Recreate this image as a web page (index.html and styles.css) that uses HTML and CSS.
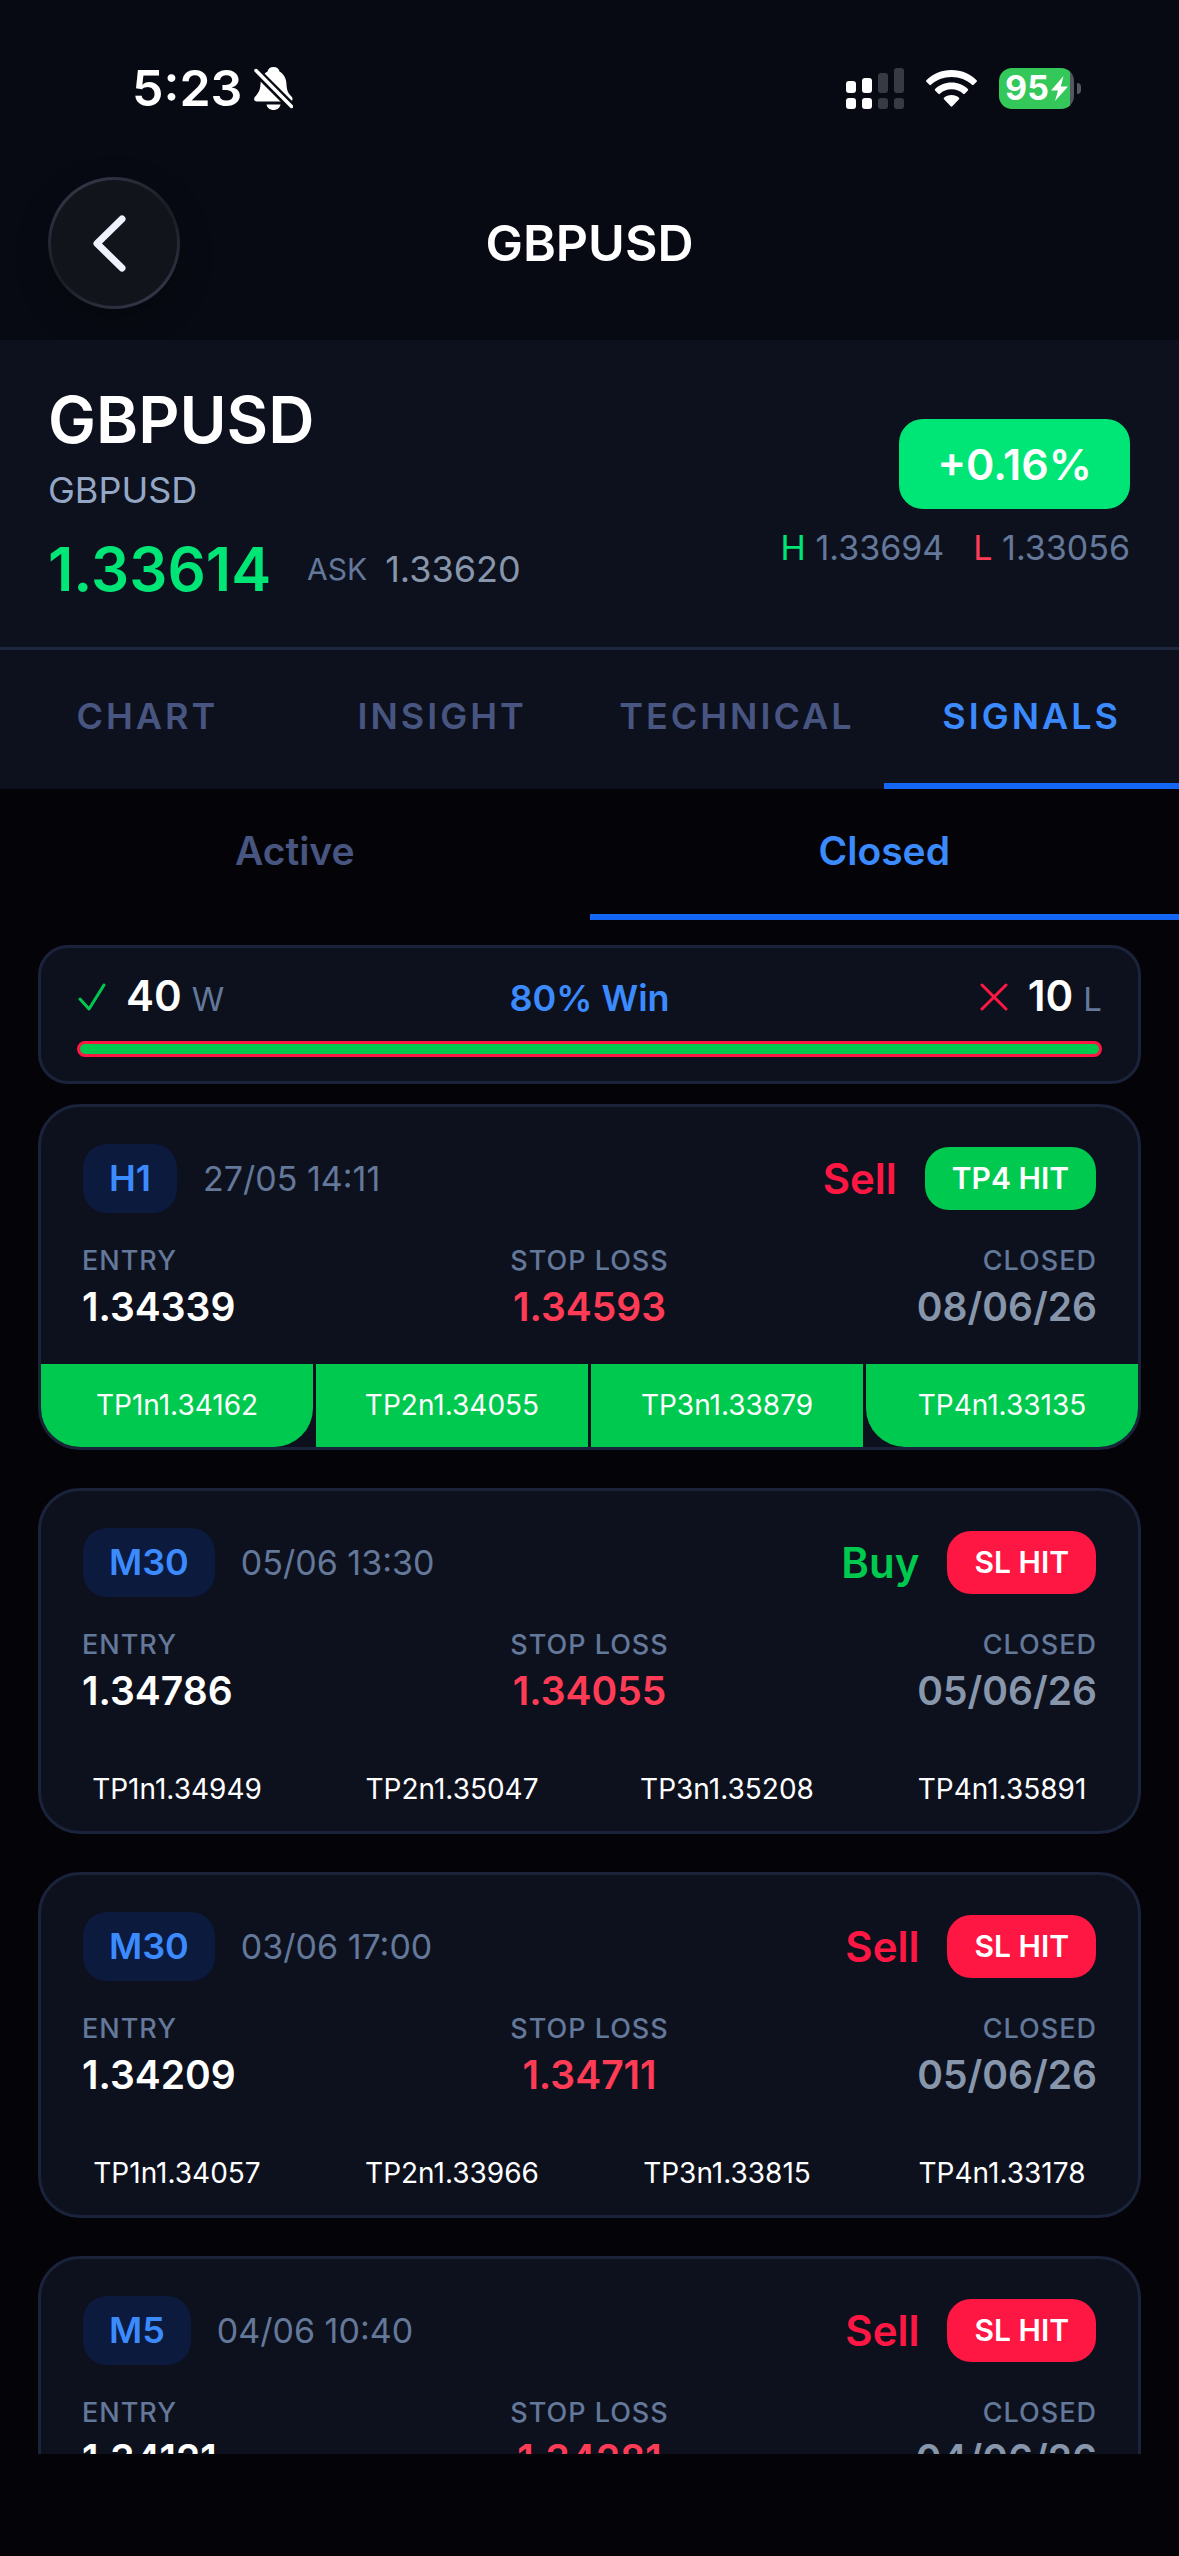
FILE: index.html
```html
<!DOCTYPE html>
<html lang="en">
<head>
    <meta charset="UTF-8">
    <meta name="viewport" content="width=device-width, initial-scale=1.0">
    <title>GBPUSD - Signals</title>
    <link rel="stylesheet" href="styles.css">
</head>
<body>
    <div class="app">
        <div class="status-bar">
            <div class="status-left">
                <span class="time">5:23</span>
                <svg class="bell" viewBox="0 0 39 43" aria-label="Silent">
                    <path fill="#fff" d="M19.500 0c3.500 0 5.500 2 6 4.500 4.500 2.500 6.800 7 7 13 .3 7 2.500 9.500 5 12 1.800 2 1.300 5-1.500 5H3c-3 0-3.800-3-1.800-5C4 26.500 6 24 6.500 17.500c.3-6 2.500-10.500 7-13C14 2 16 0 19.500 0z"/>
                    <path fill="#fff" d="M12.500 37.500h14c-.6 3.300-3.400 5.500-7 5.500s-6.400-2.200-7-5.500z"/>
                    <path stroke="#070a12" stroke-width="8.500" d="M-1 1l42 42"/>
                    <path stroke="#fff" stroke-width="3.500" stroke-linecap="round" d="M2 3.500l35.500 36"/>
                </svg>
            </div>
            <div class="status-right">
                <svg class="signal" viewBox="0 0 58 41" aria-label="Signal">
                    <g fill="#fff">
                        <rect x="0" y="13" width="10" height="12" rx="3"/>
                        <rect x="16" y="10" width="10" height="15" rx="3"/>
                        <rect x="0" y="30" width="10" height="11" rx="3"/>
                        <rect x="16" y="30" width="10" height="11" rx="3"/>
                    </g>
                    <g fill="#383a43">
                        <rect x="32" y="5" width="10" height="20" rx="3"/>
                        <rect x="48" y="0" width="10" height="25" rx="3"/>
                        <rect x="32" y="30" width="10" height="11" rx="3"/>
                        <rect x="48" y="30" width="10" height="11" rx="3"/>
                    </g>
                </svg>
                <svg class="wifi" viewBox="0 0 51 37" aria-label="Wi-Fi">
                    <path fill="#fff" d="M25.500 0C35.500 0 44.500 4 50.600 10.200c.5.500.5 1.100 0 1.600l-3 3c-.5.500-1.100.5-1.600 0C40.700 9.800 33.500 7 25.500 7S10.300 9.800 5 14.800c-.5.500-1.100.5-1.600 0l-3-3c-.5-.5-.5-1.100 0-1.600C6.500 4 15.500 0 25.500 0z"/>
                    <path fill="#fff" d="M25.500 12.500c6.500 0 12.200 2.500 16.400 6.500.5.500.5 1.100 0 1.600l-3.200 3.200c-.5.500-1.100.5-1.600 0-3-2.800-7-4.500-11.600-4.500s-8.600 1.700-11.600 4.500c-.5.500-1.100.5-1.600 0l-3.200-3.200c-.5-.5-.5-1.100 0-1.600 4.200-4 9.900-6.500 16.400-6.500z"/>
                    <path fill="#fff" d="M25.500 25c3 0 5.500 1 7.500 2.700.5.500.5 1.100 0 1.600l-6.700 7c-.5.500-1.100.5-1.600 0l-6.700-7c-.5-.5-.5-1.100 0-1.600C20 26 22.500 25 25.500 25z"/>
                </svg>
                <div class="battery">
                    <span class="battery-level">95</span>
                    <svg class="bolt" viewBox="0 0 17 25" aria-label="Charging">
                        <path fill="#fff" d="M12.500 0L0 14.500h7L4 25 17 10.500H9.800z"/>
                    </svg>
                </div>
            </div>
        </div>

        <header class="navbar">
            <button class="back" aria-label="Back">
                <svg viewBox="0 0 33 57">
                    <path fill="none" stroke="#eff2fc" stroke-width="7" stroke-linecap="round" stroke-linejoin="round" d="M29 4L4 28.500 29 53"/>
                </svg>
            </button>
            <div class="navbar-title">GBPUSD</div>
        </header>

        <section class="quote">
            <div class="quote-left">
                <h1>GBPUSD</h1>
                <div class="quote-name">GBPUSD</div>
                <div class="quote-prices">
                    <span class="bid">1.33614</span>
                    <span class="ask-label">ASK</span>
                    <span class="ask">1.33620</span>
                </div>
            </div>
            <div class="quote-right">
                <div class="change">+0.16%</div>
                <div class="range">
                    <span><b class="high">H</b> 1.33694</span>
                    <span><b class="low">L</b> 1.33056</span>
                </div>
            </div>
        </section>

        <nav class="tabs">
            <button>CHART</button>
            <button>INSIGHT</button>
            <button>TECHNICAL</button>
            <button class="active">SIGNALS</button>
        </nav>

        <nav class="subtabs">
            <button>Active</button>
            <button class="active">Closed</button>
        </nav>

        <main class="list">
            <div class="stats">
                <div class="stats-row">
                    <div class="stat">
                        <svg viewBox="0 0 28 28">
                            <path fill="none" stroke="#00c950" stroke-width="3" stroke-linecap="round" stroke-linejoin="round" d="M2 16l9 10L26 2"/>
                        </svg>
                        <strong>40</strong>
                        <span>W</span>
                    </div>
                    <div class="win-rate">80% Win</div>
                    <div class="stat stat-loss">
                        <svg viewBox="0 0 28 28">
                            <path fill="none" stroke="#ff1744" stroke-width="3" stroke-linecap="round" d="M2 2l24 24M26 2L2 26"/>
                        </svg>
                        <strong>10</strong>
                        <span>L</span>
                    </div>
                </div>
                <div class="stats-bar"></div>
            </div>

            <article class="card">
                <div class="card-head">
                    <span class="timeframe">H1</span>
                    <span class="opened">27/05 14:11</span>
                    <span class="side sell">Sell</span>
                    <span class="result hit">TP4 HIT</span>
                </div>
                <div class="levels">
                    <div class="level">
                        <span>ENTRY</span>
                        <strong>1.34339</strong>
                    </div>
                    <div class="level stop">
                        <span>STOP LOSS</span>
                        <strong>1.34593</strong>
                    </div>
                    <div class="level closed">
                        <span>CLOSED</span>
                        <strong>08/06/26</strong>
                    </div>
                </div>
                <div class="targets reached">
                    <div>TP1n1.34162</div>
                    <div>TP2n1.34055</div>
                    <div>TP3n1.33879</div>
                    <div>TP4n1.33135</div>
                </div>
            </article>

            <article class="card">
                <div class="card-head">
                    <span class="timeframe">M30</span>
                    <span class="opened">05/06 13:30</span>
                    <span class="side buy">Buy</span>
                    <span class="result">SL HIT</span>
                </div>
                <div class="levels">
                    <div class="level">
                        <span>ENTRY</span>
                        <strong>1.34786</strong>
                    </div>
                    <div class="level stop">
                        <span>STOP LOSS</span>
                        <strong>1.34055</strong>
                    </div>
                    <div class="level closed">
                        <span>CLOSED</span>
                        <strong>05/06/26</strong>
                    </div>
                </div>
                <div class="targets">
                    <div>TP1n1.34949</div>
                    <div>TP2n1.35047</div>
                    <div>TP3n1.35208</div>
                    <div>TP4n1.35891</div>
                </div>
            </article>

            <article class="card">
                <div class="card-head">
                    <span class="timeframe">M30</span>
                    <span class="opened">03/06 17:00</span>
                    <span class="side sell">Sell</span>
                    <span class="result">SL HIT</span>
                </div>
                <div class="levels">
                    <div class="level">
                        <span>ENTRY</span>
                        <strong>1.34209</strong>
                    </div>
                    <div class="level stop">
                        <span>STOP LOSS</span>
                        <strong>1.34711</strong>
                    </div>
                    <div class="level closed">
                        <span>CLOSED</span>
                        <strong>05/06/26</strong>
                    </div>
                </div>
                <div class="targets">
                    <div>TP1n1.34057</div>
                    <div>TP2n1.33966</div>
                    <div>TP3n1.33815</div>
                    <div>TP4n1.33178</div>
                </div>
            </article>

            <article class="card">
                <div class="card-head">
                    <span class="timeframe">M5</span>
                    <span class="opened">04/06 10:40</span>
                    <span class="side sell">Sell</span>
                    <span class="result">SL HIT</span>
                </div>
                <div class="levels">
                    <div class="level">
                        <span>ENTRY</span>
                        <strong>1.34121</strong>
                    </div>
                    <div class="level stop">
                        <span>STOP LOSS</span>
                        <strong>1.34281</strong>
                    </div>
                    <div class="level closed">
                        <span>CLOSED</span>
                        <strong>04/06/26</strong>
                    </div>
                </div>
            </article>
        </main>
    </div>
</body>
</html>
```
FILE: styles.css
```css
* {
    box-sizing: border-box;
}
body {
    margin: 0;
    font-family: Inter, "Liberation Sans", sans-serif;
    background: #040408;
    color: #fff;
}
button {
    font-family: inherit;
    border: none;
    background: none;
    padding: 0;
}
.app {
    display: flex;
    flex-direction: column;
    height: 100vh;
    padding-bottom: 102px;
}

/* status bar */
.status-bar {
    display: flex;
    justify-content: space-between;
    align-items: center;
    flex-shrink: 0;
    padding: 58px 105px 59px 132px;
    background: #070a12;
}
.status-left,
.status-right {
    display: flex;
    align-items: center;
}
.status-left {
    gap: 12px;
}
.status-right {
    gap: 22px;
}
.time {
    font-size: 50px;
    font-weight: 600;
    line-height: 60px;
}
.bell {
    width: 39px;
    height: 43px;
}
.signal {
    width: 58px;
    height: 41px;
}
.wifi {
    width: 51px;
    height: 37px;
}
.battery {
    position: relative;
    display: flex;
    align-items: center;
    justify-content: center;
    gap: 2px;
    width: 75px;
    height: 41px;
    border-radius: 13px;
    background: linear-gradient(to right, #34c759 71px, #55565f 71px);
}
.battery::after {
    content: "";
    position: absolute;
    right: -7px;
    top: 15px;
    width: 4px;
    height: 11px;
    border-radius: 0 4px 4px 0;
    background: #55565f;
}
.battery-level {
    font-size: 34px;
    font-weight: 700;
    line-height: 40px;
}
.bolt {
    width: 17px;
    height: 25px;
}

/* nav bar */
.navbar {
    display: grid;
    grid-template-columns: 132px 1fr 132px;
    align-items: center;
    flex-shrink: 0;
    padding: 0 48px 31px;
    background: #070a12;
}
.back {
    display: flex;
    align-items: center;
    justify-content: center;
    width: 132px;
    height: 132px;
    padding-right: 10px;
    border: 3px solid transparent;
    border-radius: 50%;
    background:
        linear-gradient(#11141b, #11141b) padding-box,
        linear-gradient(150deg, #3d3d50, #1b1d27 45%, #1b1d27 55%, #3d3d50) border-box;
    box-shadow: 0 12px 36px rgba(0, 0, 0, 0.2);
}
.back svg {
    width: 33px;
    height: 57px;
}
.navbar-title {
    font-size: 50px;
    font-weight: 600;
    line-height: 60px;
    text-align: center;
}

/* quote */
.quote {
    display: flex;
    justify-content: space-between;
    align-items: center;
    flex-shrink: 0;
    padding: 41px 49px 42px 48px;
    border-bottom: 3px solid #1c263d;
    background: #0d111e;
}
h1 {
    margin: 0;
    font-size: 64px;
    font-weight: 600;
    line-height: 78px;
}
.quote-name {
    margin: 10px 0 22px;
    font-size: 36px;
    line-height: 42px;
    color: #94a8c6;
}
.quote-prices {
    display: flex;
    align-items: center;
}
.bid {
    margin-right: 36px;
    font-size: 60px;
    font-weight: 600;
    line-height: 72px;
    color: #00e676;
}
.ask-label {
    margin-right: 18px;
    font-size: 30px;
    color: #64789a;
}
.ask {
    font-size: 36px;
    color: #8896ab;
}
.quote-right {
    display: flex;
    flex-direction: column;
    align-items: flex-end;
    gap: 19px;
}
.change {
    padding: 20px 38px;
    border-radius: 24px;
    font-size: 43px;
    font-weight: 600;
    line-height: 50px;
    background: #00e676;
}
.range {
    display: flex;
    gap: 29px;
    font-size: 34px;
    line-height: 40px;
    color: #64789a;
}
.range b {
    font-weight: 400;
}
.high {
    color: #00e676;
}
.low {
    color: #ff3b55;
}

/* tabs */
.tabs,
.subtabs {
    display: flex;
    flex-shrink: 0;
}
.tabs {
    background: #0d111e;
}
.tabs button,
.subtabs button {
    flex: 1;
    border-bottom: 6px solid transparent;
    font-weight: 600;
    color: #475580;
}
.tabs button {
    padding: 44px 0;
    font-size: 36px;
    line-height: 45px;
    letter-spacing: 3px;
}
.subtabs button {
    padding: 39px 0 40px;
    font-size: 39px;
    line-height: 46px;
}
.tabs .active,
.subtabs .active {
    border-bottom-color: #1466f5;
    color: #3b8bff;
}

/* signals */
.list {
    display: flex;
    flex-direction: column;
    flex: 1;
    min-height: 0;
    padding: 25px 38px 0;
    overflow: hidden;
}
.stats,
.card {
    flex-shrink: 0;
    border: 3px solid #1a233a;
    background: #0d111e;
}
.stats {
    margin-bottom: 20px;
    padding: 23px 36px 24px;
    border-radius: 30px;
}
.stats-row {
    display: grid;
    grid-template-columns: 1fr auto 1fr;
    align-items: center;
}
.stat {
    display: flex;
    align-items: baseline;
    line-height: 50px;
}
.stat-loss {
    justify-content: flex-end;
}
.stat svg {
    width: 30px;
    height: 28px;
}
.stat strong {
    margin: 0 10px 0 19px;
    font-size: 42px;
    font-weight: 600;
}
.stat span {
    font-size: 33px;
    color: #64789a;
}
.win-rate {
    font-size: 36px;
    font-weight: 600;
    color: #3b8bff;
}
.stats-bar {
    height: 16px;
    margin-top: 17px;
    border: 3px solid #ff1744;
    border-radius: 8px;
    background: #00c950;
}
.card {
    margin-bottom: 38px;
    border-radius: 42px;
}
.card-head {
    display: flex;
    align-items: center;
    padding: 37px 42px 32px;
}
.timeframe {
    padding: 12px 26px;
    border-radius: 24px;
    font-size: 36px;
    font-weight: 600;
    line-height: 45px;
    color: #3b8bff;
    background: #0b1a3d;
}
.opened {
    margin: 0 auto 0 26px;
    font-size: 34px;
    color: #64789a;
}
.side {
    margin-right: 28px;
    font-size: 42px;
    font-weight: 600;
    line-height: 50px;
}
.sell {
    color: #ff1744;
}
.buy {
    color: #00c950;
}
.result {
    padding: 13px 27px;
    border-radius: 24px;
    font-size: 30px;
    font-weight: 600;
    line-height: 37px;
    background: #ff1744;
}
.hit {
    background: #00c950;
}
.levels {
    display: grid;
    grid-template-columns: repeat(3, 1fr);
    padding: 0 41px 34px;
}
.level {
    display: flex;
    flex-direction: column;
    gap: 7px;
}
.level span {
    font-size: 27px;
    font-weight: 500;
    line-height: 32px;
    letter-spacing: 1px;
    color: #64789a;
}
.level strong {
    font-size: 39px;
    font-weight: 600;
    line-height: 46px;
}
.stop {
    text-align: center;
}
.stop strong {
    color: #ff3b55;
}
.closed {
    text-align: right;
}
.closed strong {
    color: #8896ab;
}
.targets {
    display: grid;
    grid-template-columns: repeat(4, 1fr);
    gap: 3px;
    font-size: 28px;
    line-height: 35px;
    text-align: center;
}
.targets div {
    padding: 24px 0;
}
.reached div {
    background: #00c950;
}
.reached div:first-child,
.reached div:last-child {
    border-radius: 0 0 39px 39px;
}
```
